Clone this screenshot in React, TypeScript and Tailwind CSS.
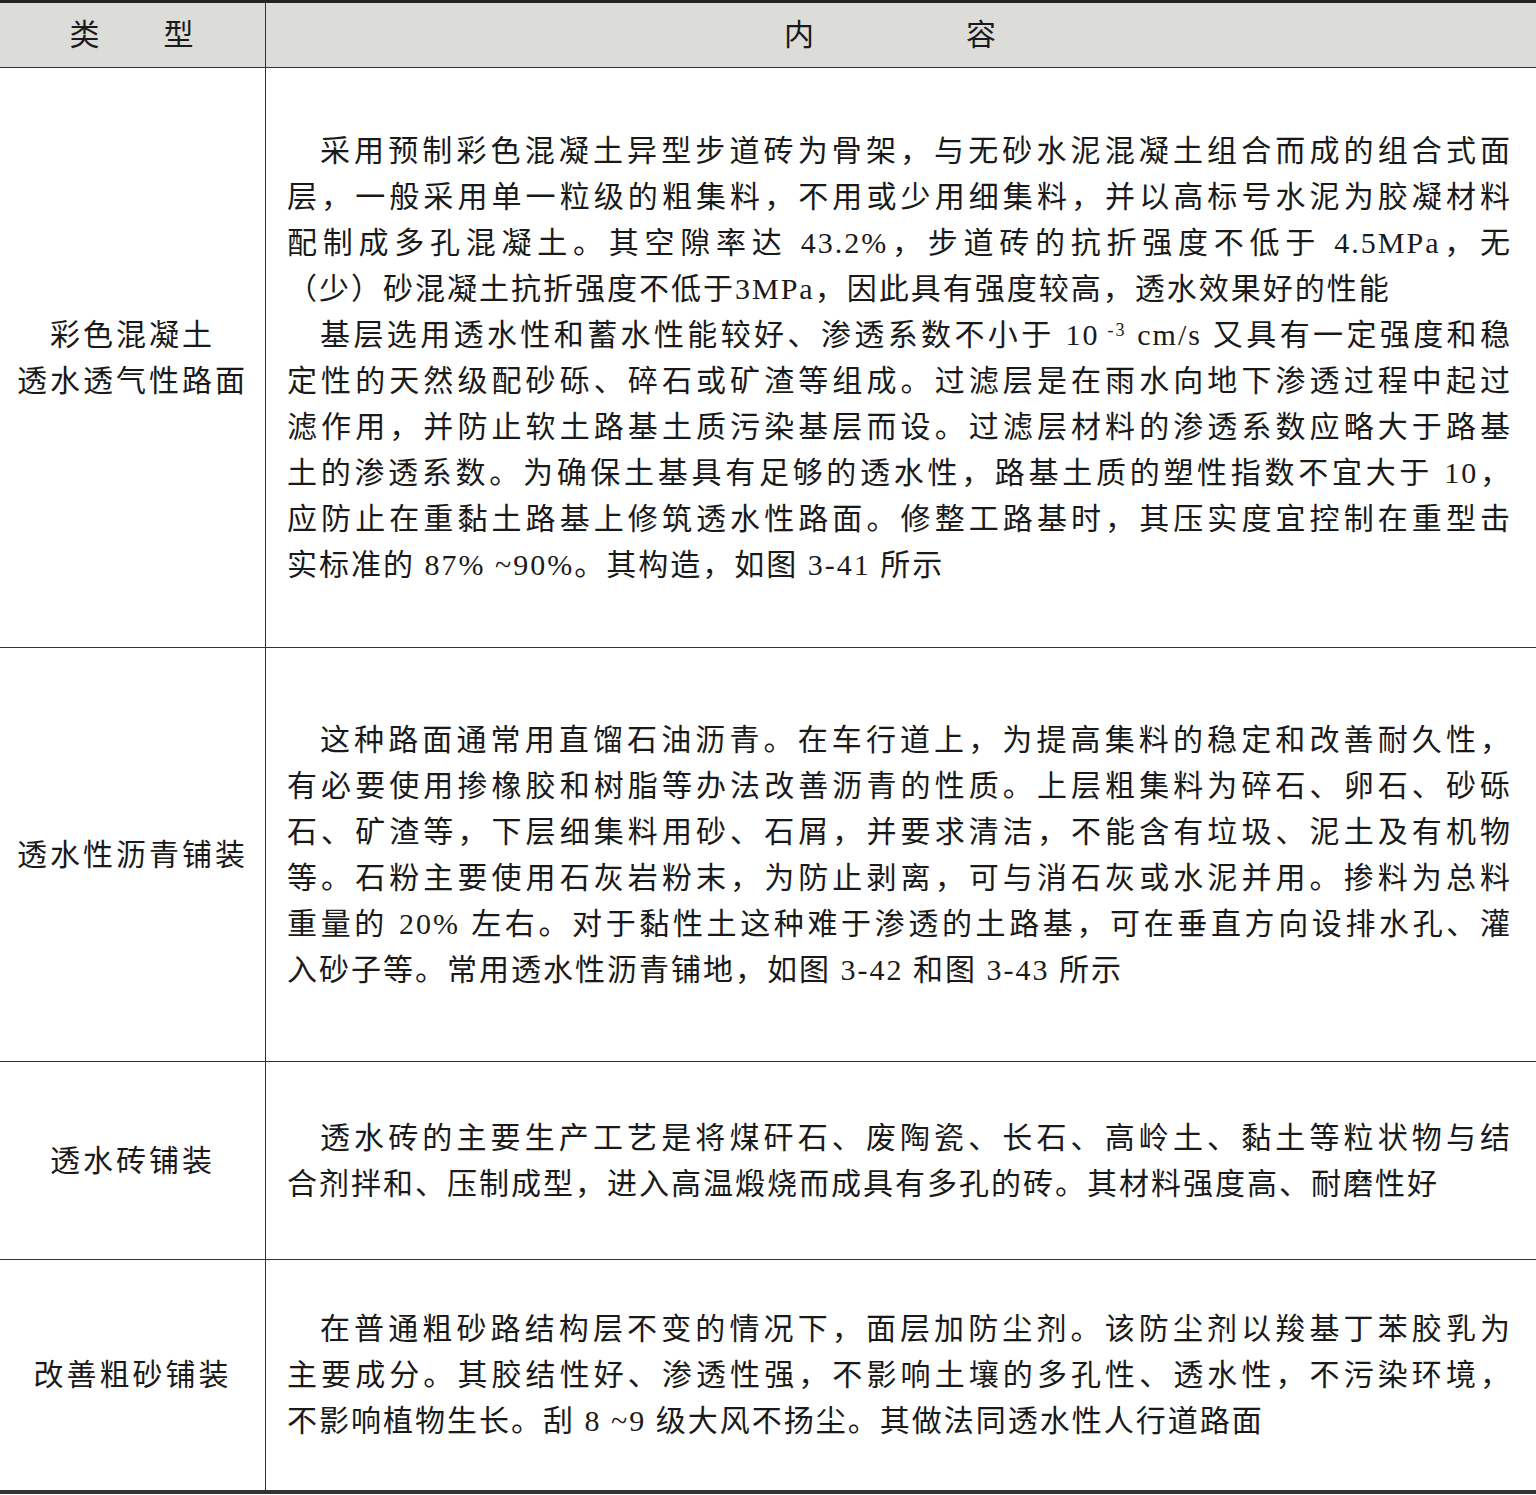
import React from "react";

type P = { lines: React.ReactNode[] };

const rows: { h: string; left: string[]; paras: React.ReactNode[][] }[] = [
  {
    h: "h-[580px]",
    left: ["彩色混凝土", "透水透气性路面"],
    paras: [
      [
        "采用预制彩色混凝土异型步道砖为骨架，与无砂水泥混凝土组合而成的组合式面",
        "层，一般采用单一粒级的粗集料，不用或少用细集料，并以高标号水泥为胶凝材料",
        "配制成多孔混凝土。其空隙率达 43.2%，步道砖的抗折强度不低于 4.5MPa，无",
        "（少）砂混凝土抗折强度不低于3MPa，因此具有强度较高，透水效果好的性能",
      ],
      [
        <>基层选用透水性和蓄水性能较好、渗透系数不小于 10<sup className="text-[18px]"> -3</sup> cm/s 又具有一定强度和稳</>,
        "定性的天然级配砂砾、碎石或矿渣等组成。过滤层是在雨水向地下渗透过程中起过",
        "滤作用，并防止软土路基土质污染基层而设。过滤层材料的渗透系数应略大于路基",
        "土的渗透系数。为确保土基具有足够的透水性，路基土质的塑性指数不宜大于 10，",
        "应防止在重黏土路基上修筑透水性路面。修整工路基时，其压实度宜控制在重型击",
        "实标准的 87% ~90%。其构造，如图 3-41 所示",
      ],
    ],
  },
  {
    h: "h-[414px]",
    left: ["透水性沥青铺装"],
    paras: [
      [
        "这种路面通常用直馏石油沥青。在车行道上，为提高集料的稳定和改善耐久性，",
        "有必要使用掺橡胶和树脂等办法改善沥青的性质。上层粗集料为碎石、卵石、砂砾",
        "石、矿渣等，下层细集料用砂、石屑，并要求清洁，不能含有垃圾、泥土及有机物",
        "等。石粉主要使用石灰岩粉末，为防止剥离，可与消石灰或水泥并用。掺料为总料",
        "重量的 20% 左右。对于黏性土这种难于渗透的土路基，可在垂直方向设排水孔、灌",
        "入砂子等。常用透水性沥青铺地，如图 3-42 和图 3-43 所示",
      ],
    ],
  },
  {
    h: "h-[198px]",
    left: ["透水砖铺装"],
    paras: [
      [
        "透水砖的主要生产工艺是将煤矸石、废陶瓷、长石、高岭土、黏土等粒状物与结",
        "合剂拌和、压制成型，进入高温煅烧而成具有多孔的砖。其材料强度高、耐磨性好",
      ],
    ],
  },
  {
    h: "h-[230px]",
    left: ["改善粗砂铺装"],
    paras: [
      [
        "在普通粗砂路结构层不变的情况下，面层加防尘剂。该防尘剂以羧基丁苯胶乳为",
        "主要成分。其胶结性好、渗透性强，不影响土壤的多孔性、透水性，不污染环境，",
        "不影响植物生长。刮 8 ~9 级大风不扬尘。其做法同透水性人行道路面",
      ],
    ],
  },
];

function Para({ lines }: P) {
  return (
    <div>
      {lines.map((l, i) => {
        const last = i === lines.length - 1;
        return (
          <div
            key={i}
            className={`whitespace-nowrap ${i === 0 ? "pl-[33px]" : ""} ${
              last ? "text-left" : "text-justify [text-align-last:justify]"
            }`}
          >
            {l}
          </div>
        );
      })}
    </div>
  );
}

export default function App() {
  return (
    <div
      className="w-[1536px] h-[1495px] bg-white text-[#1a1a1a] text-[30px] leading-[46px] tracking-[2px]"
      style={{ fontFamily: '"Liberation Serif", "Noto Sans CJK SC", serif' }}
    >
      <div className="border-t-[3px] border-[#222]">
        <div className="flex h-[65px] bg-[#dcdcd8] border-b border-[#333]">
          <div className="w-[266px] border-r border-[#333] flex items-center justify-center gap-[62px]">
            <span>类</span>
            <span>型</span>
          </div>
          <div className="flex-1 flex items-center justify-center gap-[150px] pr-[20px]">
            <span>内</span>
            <span>容</span>
          </div>
        </div>
        {rows.map((r, i) => (
          <div
            key={i}
            className={`flex ${r.h} ${i < rows.length - 1 ? "border-b border-[#333]" : ""}`}
          >
            <div className="w-[266px] border-r border-[#333] flex flex-col items-center justify-center tracking-[3px]">
              {r.left.map((t) => (
                <div key={t}>{t}</div>
              ))}
            </div>
            <div className="flex-1 pl-[21px] pr-[24px] flex flex-col justify-center">
              {r.paras.map((p, j) => (
                <Para key={j} lines={p} />
              ))}
            </div>
          </div>
        ))}
        <div className="border-t-[4px] border-[#333]" />
      </div>
    </div>
  );
}
